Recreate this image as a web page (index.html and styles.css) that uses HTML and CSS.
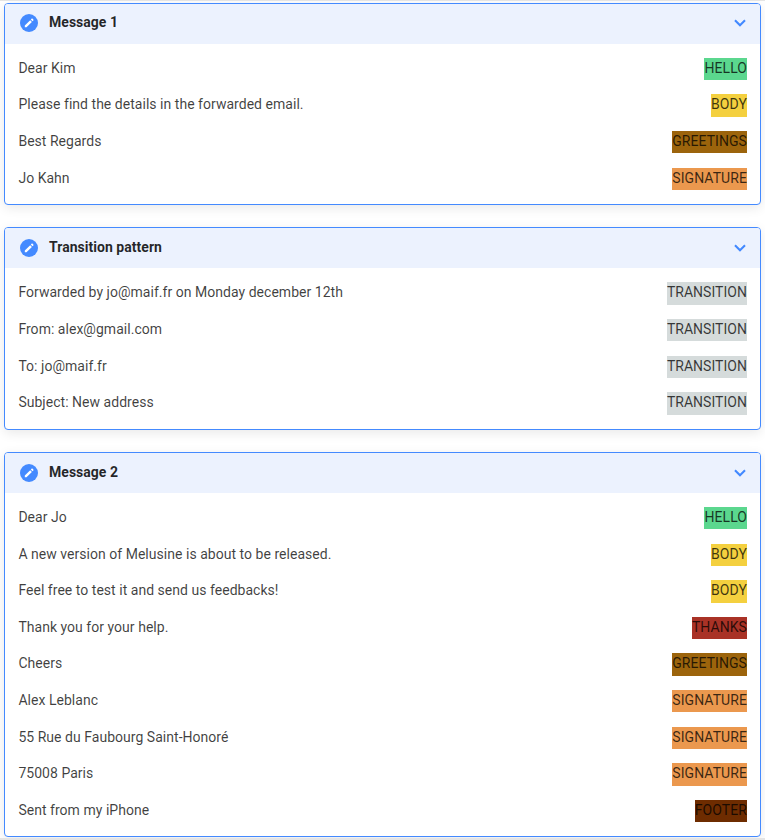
FILE: index.html
```
<!DOCTYPE html>
<html lang="en">
<head>
<meta charset="utf-8">
<title>Messages</title>
<link rel="stylesheet" href="styles.css">
</head>
<body>
<svg class="sprite" aria-hidden="true">
  <symbol id="pencil" viewBox="0 0 18 18"><circle cx="9" cy="9" r="9" fill="#448aff"/><path d="M4.8 11.6 10.2 6.2 11.9 7.9 6.5 13.3H4.8ZM10.8 5.6 11.8 4.6Q12.1 4.3 12.4 4.6L13.5 5.7Q13.8 6 13.5 6.3L12.5 7.3Z" fill="#fff"/></symbol>
  <symbol id="chevron" viewBox="0 0 12 8"><path d="M1 1.2 6 6.2 11 1.2" fill="none" stroke="#448aff" stroke-width="2.1"/></symbol>
</svg>
<main class="messages">
  <section class="card">
    <header class="card-header"><svg class="pencil"><use href="#pencil"/></svg><h2>Message 1</h2><svg class="chevron"><use href="#chevron"/></svg></header>
    <div class="rows">
      <div class="row"><span>Dear Kim</span><span class="tag hello">HELLO</span></div>
      <div class="row"><span>Please find the details in the forwarded email.</span><span class="tag body">BODY</span></div>
      <div class="row"><span>Best Regards</span><span class="tag greetings">GREETINGS</span></div>
      <div class="row"><span>Jo Kahn</span><span class="tag signature">SIGNATURE</span></div>
    </div>
  </section>
  <section class="card">
    <header class="card-header"><svg class="pencil"><use href="#pencil"/></svg><h2>Transition pattern</h2><svg class="chevron"><use href="#chevron"/></svg></header>
    <div class="rows">
      <div class="row"><span>Forwarded by jo@maif.fr on Monday december 12th</span><span class="tag transition">TRANSITION</span></div>
      <div class="row"><span>From: alex@gmail.com</span><span class="tag transition">TRANSITION</span></div>
      <div class="row"><span>To: jo@maif.fr</span><span class="tag transition">TRANSITION</span></div>
      <div class="row"><span>Subject: New address</span><span class="tag transition">TRANSITION</span></div>
    </div>
  </section>
  <section class="card">
    <header class="card-header"><svg class="pencil"><use href="#pencil"/></svg><h2>Message 2</h2><svg class="chevron"><use href="#chevron"/></svg></header>
    <div class="rows">
      <div class="row"><span>Dear Jo</span><span class="tag hello">HELLO</span></div>
      <div class="row"><span>A new version of Melusine is about to be released.</span><span class="tag body">BODY</span></div>
      <div class="row"><span>Feel free to test it and send us feedbacks!</span><span class="tag body">BODY</span></div>
      <div class="row"><span>Thank you for your help.</span><span class="tag thanks">THANKS</span></div>
      <div class="row"><span>Cheers</span><span class="tag greetings">GREETINGS</span></div>
      <div class="row"><span>Alex Leblanc</span><span class="tag signature">SIGNATURE</span></div>
      <div class="row"><span>55 Rue du Faubourg Saint-Honoré</span><span class="tag signature">SIGNATURE</span></div>
      <div class="row"><span>75008 Paris</span><span class="tag signature">SIGNATURE</span></div>
      <div class="row"><span>Sent from my iPhone</span><span class="tag footer">FOOTER</span></div>
    </div>
  </section>
</main>
<div class="page-edge"></div>
</body>
</html>
```
FILE: styles.css
```
* { box-sizing: border-box; }
html { overflow: hidden; }
body {
  margin: 0;
  height: 840px;
  overflow: hidden;
  display: flex;
  flex-direction: column;
  border-top: 1px solid #e4e4e4;
  background: #fff;
  color: rgba(0, 0, 0, 0.75);
  font: 14px/22.4px Roboto, sans-serif;
  letter-spacing: 0.03px;
}
.sprite { position: absolute; width: 0; height: 0; }
.messages {
  flex: none;
  display: flex;
  flex-direction: column;
  gap: 22.6px;
  padding: 1.7px 4px 0;
}
.card {
  border: 1px solid #448aff;
  border-radius: 4px;
  background: #fff;
  box-shadow: 0 3px 12px rgba(0, 0, 0, 0.09);
  overflow: hidden;
}
.card:nth-child(2) { margin-top: -0.2px; }
.card-header {
  display: flex;
  align-items: center;
  height: 40px;
  padding: 0 14px 1px 15px;
  background: #ecf2fe;
}
.card-header h2 {
  flex: 1;
  margin: 0 0 1.2px 11px;
  font-size: 14px;
  font-weight: 700;
  color: rgba(0, 0, 0, 0.85);
}
.pencil { width: 18px; height: 18px; }
.chevron { width: 12px; height: 8px; }
.rows { padding: 6.8px 13px 6.8px 13.4px; }
.card:nth-child(1) .rows { padding-top: 7.1px; }
.card:nth-child(2) .rows { padding-top: 7px; }
.row {
  display: flex;
  justify-content: space-between;
  align-items: center;
  height: 36.6px;
}
.row span { position: relative; top: -1px; }
.row .tag { top: 0; height: 22.4px; line-height: 20.4px; letter-spacing: 0.07px; }
.row .transition { letter-spacing: 0.03px; }
.hello { background: #5bd78e; }
.body { background: #f4d03f; }
.greetings { background: #9c640c; }
.signature { background: #eb984e; }
.transition { background: #d5dbdb; }
.thanks { background: #a93226; }
.footer { background: #6e2c00; }
.page-edge { flex: none; height: 4px; margin-top: 1px; background: #e4e4e4; }
```
